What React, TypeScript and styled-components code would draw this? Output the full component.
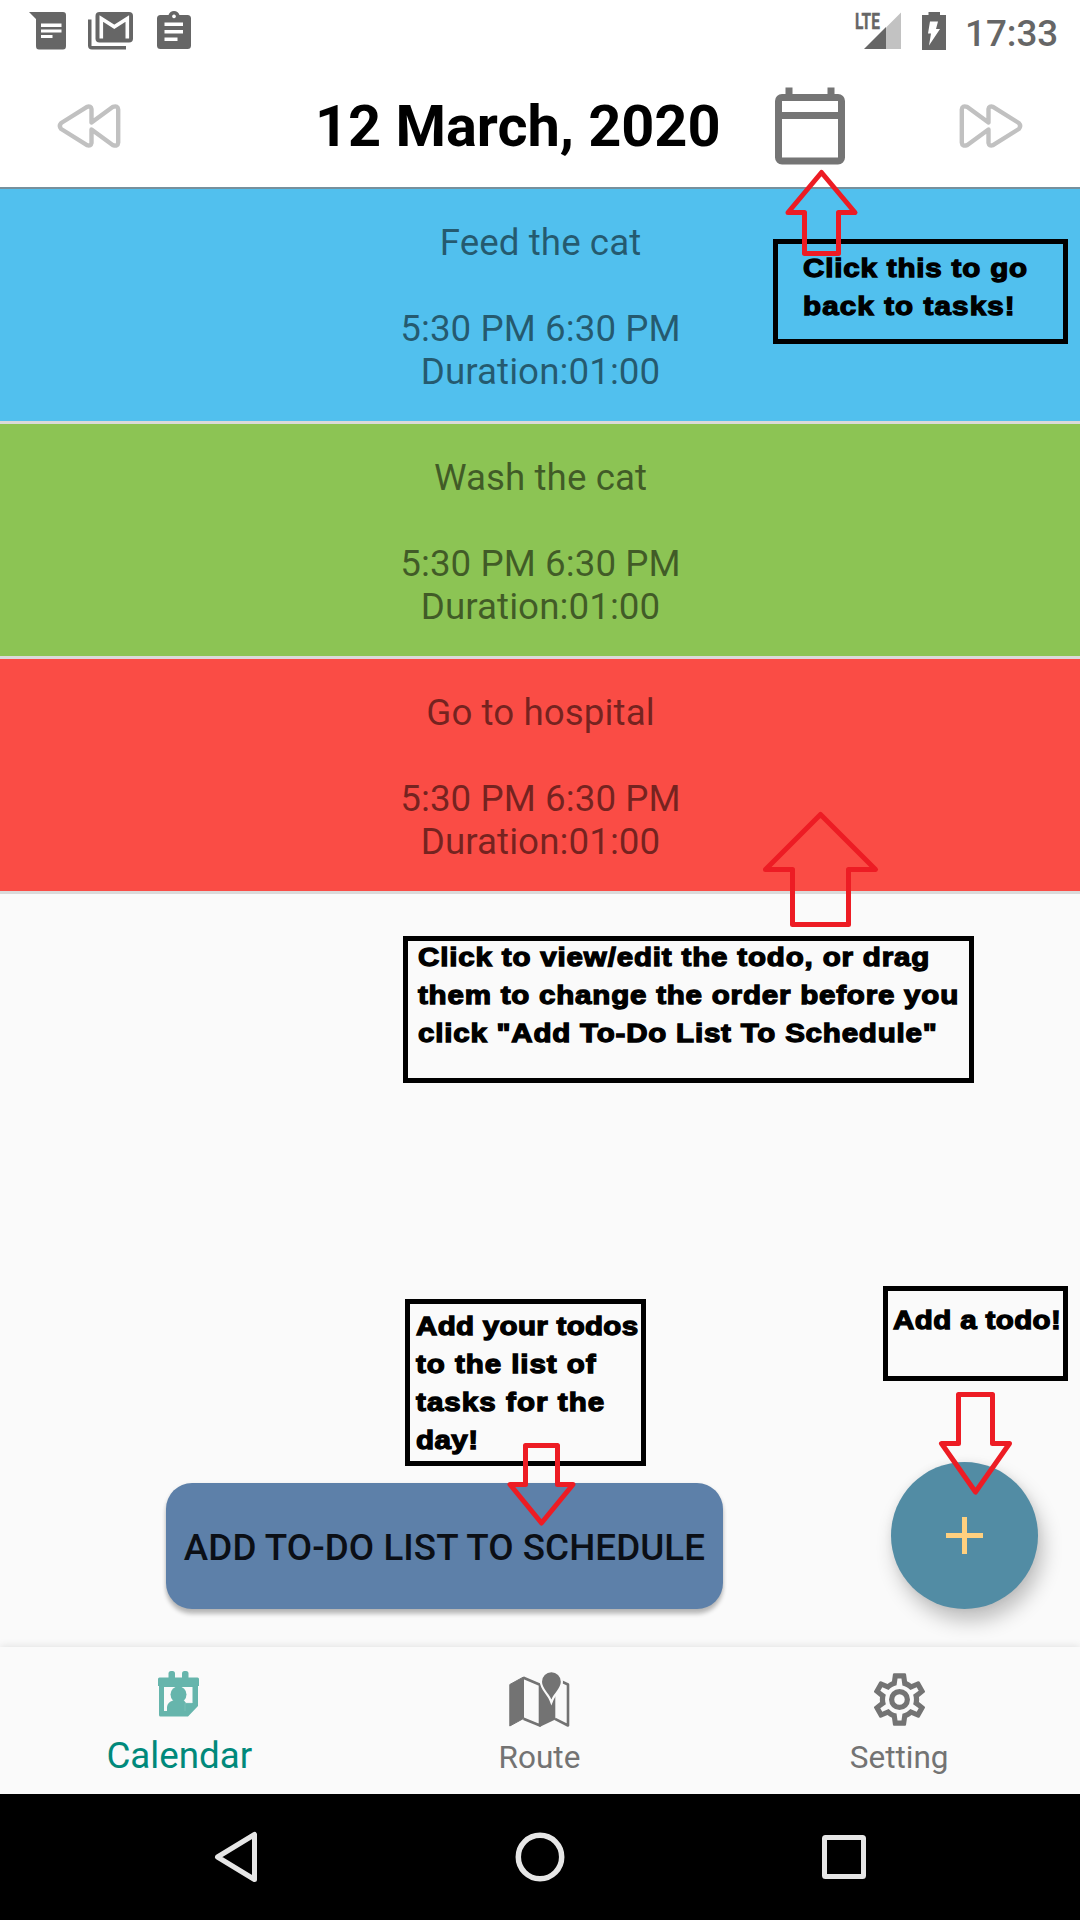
import React from "react";
import styled, { createGlobalStyle } from "styled-components";

const GlobalStyle = createGlobalStyle`
  * { box-sizing: border-box; }
  body { margin: 0; background: #fafafa; }
  svg { display: block; flex: none; }
`;

const Screen = styled.div`
  position: relative;
  display: flex;
  flex-direction: column;
  width: 1080px;
  height: 1920px;
  overflow: hidden;
  background: #fafafa;
  font-family: Roboto, "Liberation Sans", sans-serif;
`;

/* ---------- status bar ---------- */

const StatusBar = styled.header`
  display: flex;
  align-items: center;
  justify-content: space-between;
  height: 63px;
  padding: 0 22px 1px 29px;
  background: #fff;
  color: #666;
`;

const StatusGroup = styled.div<{ $gap: number }>`
  display: flex;
  align-items: center;
  gap: ${(p) => p.$gap}px;
`;

const Signal = styled.div`
  position: relative;
  width: 46px;
  height: 38px;
`;

const SignalLabel = styled.span`
  position: absolute;
  left: 0;
  top: 0;
  font-size: 22px;
  line-height: 20px;
  font-weight: 700;
  -webkit-text-stroke: 0.4px #666;
  transform: scaleX(0.7);
  transform-origin: left;
`;

const Clock = styled.span`
  width: 93px;
  margin-left: -2px;
  padding-top: 5px;
  font-size: 36.75px;
  line-height: 43px;
  font-weight: 500;
`;

/* ---------- date header ---------- */

const DateHeader = styled.div`
  display: flex;
  align-items: center;
  height: 126px;
  padding: 2px 57px 0;
  background: #fff;
  border-bottom: 2px solid #76909d;
`;

const DateTitle = styled.h1`
  flex: 1;
  margin: 0;
  padding-left: 194px;
  font-size: 57.75px;
  line-height: 68px;
  font-weight: 700;
  letter-spacing: -0.05px;
  color: #000;
  white-space: nowrap;
`;

const IconButton = styled.button<{ $right?: number }>`
  display: block;
  padding: 0;
  border: 0;
  background: none;
  margin-right: ${(p) => p.$right ?? 0}px;
`;

/* ---------- tasks ---------- */

const TaskList = styled.main`
  flex: 1;
  display: flex;
  flex-direction: column;
`;

const TaskRow = styled.article<{ $color: string }>`
  height: 235px;
  padding: 32px 0 0 1px;
  border-bottom: 3px solid #dadada;
  background: ${(p) => p.$color};
  color: rgba(0, 0, 0, 0.54);
  font-size: 36.75px;
  line-height: 43px;
  letter-spacing: 0.06px;
  text-align: center;
`;

const TaskTitle = styled.div`
  margin-bottom: 43px;
`;

const Actions = styled.div`
  display: flex;
  justify-content: space-between;
  align-items: flex-end;
  margin-top: auto;
  padding: 0 42px 38px 166px;
`;

const ScheduleButton = styled.button`
  width: 557px;
  height: 126px;
  padding: 2px 0 0;
  border: 0;
  border-radius: 26px;
  background: #5d80a9;
  color: #0b0f16;
  box-shadow: 0 5px 4px rgba(0, 0, 0, 0.24), 0 1px 4px rgba(0, 0, 0, 0.08);
  font: 500 36.75px/43px Roboto, sans-serif;
  letter-spacing: 0.08px;
  white-space: nowrap;
`;

const AddButton = styled.button`
  display: grid;
  place-items: center;
  width: 147px;
  height: 147px;
  padding: 0;
  border: 0;
  border-radius: 50%;
  background: #528ca4;
  box-shadow: 5px 12px 20px rgba(0, 0, 0, 0.24), 0 0 8px rgba(0, 0, 0, 0.06);
`;

/* ---------- bottom bars ---------- */

const Tabs = styled.nav`
  display: grid;
  grid-template-columns: repeat(3, 1fr);
  height: 147px;
  padding-right: 1px;
  background: #fafafa;
  box-shadow: 0 -1px 8px rgba(0, 0, 0, 0.1);
`;

const Tab = styled.div<{ $active?: boolean }>`
  display: flex;
  flex-direction: column;
  align-items: center;
  justify-content: space-between;
  padding: ${(p) => (p.$active ? "24px 1px 17px 0" : "24px 0 18px")};
  color: ${(p) => (p.$active ? "#00897b" : "#737373")};
  font-size: ${(p) => (p.$active ? 36.75 : 31.5)}px;
  line-height: ${(p) => (p.$active ? 43 : 37)}px;
`;

const SystemBar = styled.footer`
  display: flex;
  justify-content: space-between;
  align-items: center;
  height: 126px;
  padding: 0 214px 0 214px;
  background: #000;
`;

/* ---------- help callouts floating over the screen ---------- */

const Callout = styled.div<{ $x: number; $y: number; $w: number; $h: number; $px: number; $py: number }>`
  position: absolute;
  left: ${(p) => p.$x}px;
  top: ${(p) => p.$y}px;
  width: ${(p) => p.$w}px;
  height: ${(p) => p.$h}px;
  padding-left: ${(p) => p.$px}px;
  border: 5px solid #000;
  & > p:first-child { margin-top: ${(p) => p.$py}px; }
`;

const CalloutLine = styled.p<{ $spacing: number }>`
  margin: 0;
  width: max-content;
  color: #000;
  font: 700 26.6px/38px "Liberation Sans", Arial, sans-serif;
  letter-spacing: ${(p) => p.$spacing}px;
  -webkit-text-stroke: 1.3px #000;
  transform: scaleX(1.11);
  transform-origin: left top;
  white-space: pre;
`;

const ArrowLayer = styled.svg`
  position: absolute;
  left: 0;
  top: 0;
  pointer-events: none;
`;

const tasks = [
  { title: "Feed the cat", color: "#51c0ee" },
  { title: "Wash the cat", color: "#8cc454" },
  { title: "Go to hospital", color: "#fa4c45" },
];

const callouts: { x: number; y: number; w: number; h: number; px: number; py: number; lines: [string, number][] }[] = [
  {
    x: 773, y: 239, w: 295, h: 105, px: 25, py: 4.5,
    lines: [["Click this to go", 0.75], ["back to tasks!", 1.02]],
  },
  {
    x: 403, y: 936, w: 571, h: 147, px: 9.5, py: -3,
    lines: [
      ["Click to view/edit the todo, or drag", 0.75],
      ["them to change the order before you", 0.71],
      ['click "Add To-Do List To Schedule"', 0.71],
    ],
  },
  {
    x: 405, y: 1299, w: 241, h: 167, px: 5.5, py: 2.5,
    lines: [["Add your todos", 0.28], ["to the list of", 0.85], ["tasks for the", 0.95], ["day!", 0.4]],
  },
  { x: 883, y: 1286, w: 185, h: 95, px: 5, py: 9.5, lines: [["Add a todo!", 0.35]] },
];

const arrows = [
  "821.5,172.5 855,212.5 838.5,212.5 838.5,253.5 804.5,253.5 804.5,212.5 788,212.5",
  "820.5,814.5 875.5,869.5 848.5,869.5 848.5,924.5 792.5,924.5 792.5,869.5 765.5,869.5",
  "525.5,1445.5 557.5,1445.5 557.5,1484.5 573,1484.5 541.5,1523 510,1484.5 525.5,1484.5",
  "958.5,1394.5 992.5,1394.5 992.5,1443.5 1009.5,1443.5 975.5,1492 941.5,1443.5 958.5,1443.5",
];

const MessageIcon = () => (
  <svg width="38" height="38" viewBox="0 0 38 38">
    <path fill="#666" d="M0 0H34Q37 0 37 3V34Q37 37.500 34 37.500H10Q7 37.500 7 34V7Z" />
    <path fill="#fff" d="M12 11.500h20.500v3.500H12zM12 17.500h20.500v3H12zM12 23h11.500v3H12z" />
  </svg>
);

const MailIcon = () => (
  <svg width="48" height="38" viewBox="0 0 48 38">
    <path fill="#666" d="M0 7.500h3.500V34H38v3.500H4Q0 37.500 0 33.500Z" />
    <rect x="7.500" y="0" width="37.500" height="30.500" rx="4" fill="#666" />
    <path fill="none" stroke="#fff" strokeWidth="3.600" d="M13.300 26.500V6.500L26.300 14.800L39.300 6.500V26.500" />
  </svg>
);

const ClipboardIcon = () => (
  <svg width="34" height="40" viewBox="0 0 34 40">
    <path fill="#666" fillRule="evenodd" d="M3.500 4H11.500C12.500 1.500 14.400 0 17 0S21.500 1.500 22.500 4H30.500Q34 4 34 7.500V34.500Q34 38 30.500 38H3.500Q0 38 0 34.500V7.500Q0 4 3.500 4ZM17 3.500a1.900 1.900 0 1 0 .01 0Z" />
    <path fill="#fff" d="M7.500 11.500H26V15H7.500zM7.500 19H26v3.500H7.500zM7.500 26.500H20.500V30H7.500z" />
  </svg>
);

const BatteryIcon = () => (
  <svg width="24" height="38" viewBox="0 0 24 38">
    <path fill="#666" d="M6.500 0H18V3H24V38H0V3H6.500Z" />
    <path fill="#fff" d="M8 9.500H16L14 17H18L7 33.500L9 21.500H6Z" />
  </svg>
);

const SkipIcon = ({ forward }: { forward?: boolean }) => (
  <svg width="64" height="44" viewBox="0 0 64 44">
    <path
      transform={forward ? "translate(64 0) scale(-1 1)" : undefined}
      fill="none"
      stroke="#c1c1c1"
      strokeWidth="4.400"
      strokeLinejoin="round"
      d="M34.500 18.500V5Q34 1.700 30 2.800L4.200 19Q1.500 22 4.200 25L30 41.200Q34 42.300 34.500 39V25.500L56 41.200Q60.800 42.800 61.200 38.500V5.500Q60.800 1.200 56 2.800Z"
    />
  </svg>
);

const DateIcon = () => (
  <svg width="70" height="78" viewBox="0 0 70 78" fill="#757575">
    <path d="M10.500 0.500h7v9h-7zM52.500 0.500h7v9h-7zM4 25h62v7H4z" />
    <rect x="3.500" y="10.500" width="63" height="63.500" rx="3.500" fill="none" stroke="#757575" strokeWidth="7" />
  </svg>
);

const CalendarTabIcon = () => (
  <svg width="42" height="46" viewBox="0 0 42 46">
    <g fill="#66b5ac">
      <rect x="10.500" y="0" width="6.500" height="12" rx="2.500" />
      <rect x="24" y="0" width="6.500" height="12" rx="2.500" />
      <path fillRule="evenodd" d="M1.500 6.500H39.500Q41 6.500 41 8V15H40V35L30 45.500H2.500Q1 45.500 1 44V15H0V8Q0 6.500 1.500 6.500ZM6 16V40H27V32H34.500V16Z" />
      <circle cx="20.500" cy="23.500" r="8" />
      <path d="M9 40V36Q9.500 31 15 29.500H26L28 32V40Z" />
    </g>
    <path d="M27 40V32.300H34" fill="none" stroke="#85c5be" strokeWidth="0.600" />
  </svg>
);

const RouteIcon = () => (
  <svg width="62" height="57" viewBox="0 0 62 57">
    <path fill="#737373" stroke="#737373" strokeLinejoin="round" d="M1.800 13.500L15.500 6V47.500L1.800 55Z" />
    <path fill="none" stroke="#737373" strokeWidth="2.600" strokeLinejoin="round" d="M15.500 6.800L32 13.800V54.500L15.500 47.800" />
    <path fill="#737373" d="M31.500 14L47.300 20V48.500L31.500 56Z" />
    <path fill="none" stroke="#737373" strokeWidth="2.600" strokeLinejoin="round" d="M47 47.800L60 54.500V13.500L53 10.300" />
    <path
      fill="#737373"
      stroke="#fafafa"
      strokeWidth="4.400"
      paintOrder="stroke"
      d="M43.400 28.500C41 22.500 34 17 34 10.700A9.400 9.400 0 0 1 52.800 10.700C52.800 17 45.800 22.500 43.400 28.500Z"
    />
  </svg>
);

const GearIcon = () => (
  <svg width="63" height="57" viewBox="0 1.140 24 21.720" fill="#737373">
    <path d="M12,8A4,4 0 0,1 16,12A4,4 0 0,1 12,16A4,4 0 0,1 8,12A4,4 0 0,1 12,8M12,10A2,2 0 0,0 10,12A2,2 0 0,0 12,14A2,2 0 0,0 14,12A2,2 0 0,0 12,10M10,22C9.75,22 9.54,21.82 9.5,21.58L9.13,18.93C8.5,18.68 7.96,18.34 7.44,17.94L4.95,18.95C4.73,19.03 4.46,18.95 4.34,18.73L2.34,15.27C2.21,15.05 2.27,14.78 2.46,14.63L4.57,12.97L4.5,12L4.57,11L2.46,9.37C2.27,9.22 2.21,8.95 2.34,8.73L4.34,5.27C4.46,5.05 4.73,4.96 4.95,5.05L7.44,6.05C7.96,5.66 8.5,5.32 9.13,5.07L9.5,2.42C9.54,2.18 9.75,2 10,2H14C14.25,2 14.46,2.18 14.5,2.42L14.87,5.07C15.5,5.32 16.04,5.66 16.56,6.05L19.05,5.05C19.27,4.96 19.54,5.05 19.66,5.27L21.66,8.73C21.79,8.95 21.73,9.22 21.54,9.37L19.43,11L19.5,12L19.43,13L21.54,14.63C21.73,14.78 21.79,15.05 21.66,15.27L19.66,18.73C19.54,18.95 19.27,19.04 19.05,18.95L16.56,17.95C16.04,18.34 15.5,18.68 14.87,18.93L14.5,21.58C14.46,21.82 14.25,22 14,22H10M11.25,4L10.88,6.61C9.68,6.86 8.62,7.5 7.85,8.39L5.44,7.35L4.69,8.65L6.8,10.2C6.4,11.37 6.4,12.64 6.8,13.8L4.68,15.36L5.43,16.66L7.86,15.62C8.63,16.5 9.68,17.14 10.87,17.38L11.24,20H12.76L13.13,17.39C14.32,17.14 15.37,16.5 16.14,15.62L18.57,16.66L19.32,15.36L17.2,13.81C17.6,12.64 17.6,11.37 17.2,10.2L19.31,8.65L18.56,7.35L16.15,8.39C15.38,7.5 14.32,6.86 13.12,6.62L12.75,4H11.25Z" />
  </svg>
);

export default function App() {
  return (
    <>
      <GlobalStyle />
      <Screen>
        <StatusBar>
          <StatusGroup $gap={21}>
            <MessageIcon />
            <MailIcon />
            <ClipboardIcon />
          </StatusGroup>
          <StatusGroup $gap={21}>
            <Signal>
              <svg width="46" height="38" viewBox="0 0 46 38">
                <path fill="#c2c2c2" d="M31 15.500L46 0.500V37H31Z" />
                <path fill="#666" d="M9 37L31 15V37Z" />
              </svg>
              <SignalLabel>LTE</SignalLabel>
            </Signal>
            <BatteryIcon />
            <Clock>17:33</Clock>
          </StatusGroup>
        </StatusBar>

        <DateHeader>
          <IconButton aria-label="Previous day"><SkipIcon /></IconButton>
          <DateTitle>12 March, 2020</DateTitle>
          <IconButton $right={114} aria-label="Tasks"><DateIcon /></IconButton>
          <IconButton aria-label="Next day"><SkipIcon forward /></IconButton>
        </DateHeader>

        <TaskList>
          {tasks.map((t) => (
            <TaskRow key={t.title} $color={t.color}>
              <TaskTitle>{t.title}</TaskTitle>
              <div>5:30 PM 6:30 PM</div>
              <div>Duration:01:00</div>
            </TaskRow>
          ))}
          <Actions>
            <ScheduleButton>ADD TO-DO LIST TO SCHEDULE</ScheduleButton>
            <AddButton aria-label="Add">
              <svg width="37" height="37" viewBox="0 0 37 37">
                <path d="M16 0h5v16h16v5H21v16h-5V21H0v-5h16z" fill="#ffd07f" />
              </svg>
            </AddButton>
          </Actions>
        </TaskList>

        <Tabs>
          <Tab $active><CalendarTabIcon /><span>Calendar</span></Tab>
          <Tab><RouteIcon /><span>Route</span></Tab>
          <Tab><GearIcon /><span>Setting</span></Tab>
        </Tabs>

        <SystemBar>
          <svg width="44" height="52" viewBox="0 0 44 52">
            <path d="M40.500 3.500V48.500L3.500 26Z" fill="none" stroke="#e6e6e6" strokeWidth="5" strokeLinejoin="round" />
          </svg>
          <svg width="50" height="52" viewBox="0 0 50 52">
            <circle cx="25" cy="26" r="21.700" fill="none" stroke="#e6e6e6" strokeWidth="5.500" />
          </svg>
          <svg width="44" height="44" viewBox="0 0 44 44">
            <rect x="2.500" y="2.500" width="39" height="39" rx="1" fill="none" stroke="#e6e6e6" strokeWidth="5" />
          </svg>
        </SystemBar>

        {callouts.map((c) => (
          <Callout key={c.y} $x={c.x} $y={c.y} $w={c.w} $h={c.h} $px={c.px} $py={c.py}>
            {c.lines.map(([text, spacing]) => (
              <CalloutLine key={text} $spacing={spacing}>{text}</CalloutLine>
            ))}
          </Callout>
        ))}
        <ArrowLayer width="1080" height="1920" viewBox="0 0 1080 1920">
          {arrows.map((points) => (
            <polygon key={points} points={points} fill="none" stroke="#ed1c24" strokeWidth="5" strokeLinejoin="round" />
          ))}
        </ArrowLayer>
      </Screen>
    </>
  );
}
